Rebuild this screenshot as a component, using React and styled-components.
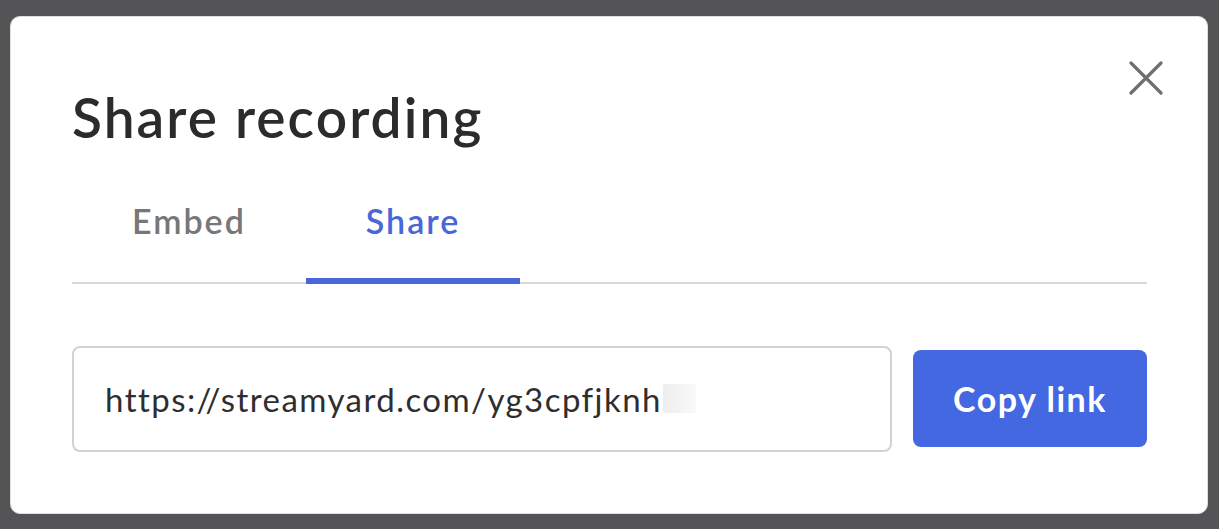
import styled, { createGlobalStyle } from "styled-components";

const GlobalStyle = createGlobalStyle`
  html, body {
    margin: 0;
    padding: 0;
    background: #545457;
  }
  body {
    font-family: Lato, "Noto Sans", Arial, sans-serif;
  }
`;

const Backdrop = styled.div`
  height: 529px;
  box-sizing: border-box;
  padding: 16px 11px 15px 10px;
`;

const Modal = styled.div`
  box-sizing: border-box;
  height: 498px;
  background: #fff;
  border: 1px solid #dedede;
  border-radius: 10px;
  padding: 44px 60px 0 61px;
`;

const Header = styled.div`
  display: flex;
  justify-content: space-between;
  align-items: flex-start;
`;

const Title = styled.h1`
  margin: 23px 0 0;
  font-size: 55px;
  line-height: 1.2;
  font-weight: 600;
  color: #2b2b2e;
  letter-spacing: 2.1px;
`;

const CloseButton = styled.button`
  display: flex;
  border: 0;
  padding: 0;
  margin-right: -16px;
  background: none;
  cursor: pointer;
  width: 34px;
  height: 34px;
`;

const Tabs = styled.div`
  display: flex;
  margin-top: 51px;
  border-bottom: 2px solid #d8d8d8;
`;

const Tab = styled.button`
  border: 0;
  background: none;
  font-family: inherit;
  font-size: 34px;
  line-height: 1.2;
  font-weight: 600;
  letter-spacing: 2px;
  padding: 0 ${(p) => p.$pad}px 36px;
  margin-bottom: -2px;
  color: ${(p) => (p.$active ? "#4a66d8" : "#777777")};
  border-bottom: 6px solid ${(p) => (p.$active ? "#4a66d8" : "transparent")};
  cursor: pointer;
`;

const LinkRow = styled.div`
  display: flex;
  align-items: center;
  gap: 21px;
  margin-top: 62px;
`;

const LinkField = styled.div`
  flex: 1;
  box-sizing: border-box;
  height: 106px;
  display: flex;
  align-items: center;
  padding: 0 31px;
  border: 2px solid #d2d2d2;
  border-radius: 8px;
  font-size: 33px;
  letter-spacing: 1.45px;
  color: #2e2e30;
`;

const Redacted = styled.span`
  display: inline-block;
  width: 33px;
  height: 29px;
  margin-left: 1px;
  background: linear-gradient(90deg, #eeeeee, #f4f4f4 60%, #fafafa);
  vertical-align: middle;
`;

const CopyButton = styled.button`
  width: 234px;
  height: 97px;
  border: 0;
  border-radius: 8px;
  background: #4467e2;
  color: #fff;
  font-family: inherit;
  font-size: 34px;
  font-weight: 700;
  letter-spacing: 1.5px;
  cursor: pointer;
`;

export default function App() {
  return (
    <>
      <GlobalStyle />
      <Backdrop>
        <Modal>
          <Header>
            <Title>Share recording</Title>
            <CloseButton aria-label="Close">
              <svg width="34" height="34" viewBox="0 0 34 34">
                <path
                  d="M2 2 L32 32 M32 2 L2 32"
                  stroke="#6f6f6f"
                  strokeWidth="3.2"
                  strokeLinecap="round"
                />
              </svg>
            </CloseButton>
          </Header>
          <Tabs>
            <Tab $pad={60}>Embed</Tab>
            <Tab $pad={60} $active>
              Share
            </Tab>
          </Tabs>
          <LinkRow>
            <LinkField>
              https://streamyard.com/yg3cpfjknh
              <Redacted />
            </LinkField>
            <CopyButton>Copy link</CopyButton>
          </LinkRow>
        </Modal>
      </Backdrop>
    </>
  );
}
